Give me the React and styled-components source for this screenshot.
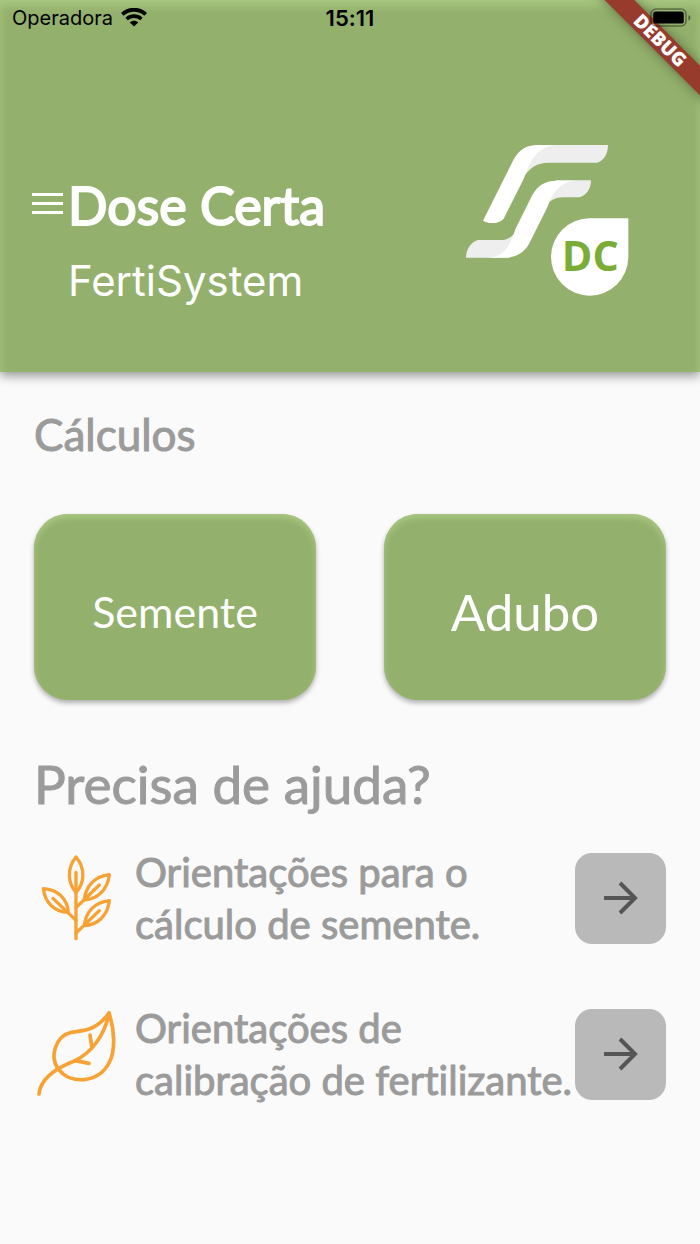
import styled, { createGlobalStyle } from "styled-components";

const GlobalStyle = createGlobalStyle`
  * {
    box-sizing: border-box;
  }
  body {
    margin: 0;
    background-color: #fafafa;
    font-family: Lato, "Open Sans", sans-serif;
    font-variant-ligatures: none;
  }
  h1, h2, p {
    margin: 0;
  }
  button {
    padding: 0;
    border: none;
    font-family: inherit;
    cursor: pointer;
  }
`;

const HeaderStyle = styled.header`
  position: relative;
  padding-bottom: 63px;
  background-color: #93b06c;
  color: white;
  box-shadow: inset 0 6px 10px #a8c880, 0 4px 10px rgba(0, 0, 0, 0.4);
`;

const StatusBar = styled.div`
  display: grid;
  grid-template-columns: 1fr auto 1fr;
  align-items: center;
  height: 36px;
  padding: 0 12px;
  color: black;
  font-family: Inter, sans-serif;
  font-size: 20px;
  line-height: 24px;

  .carrier {
    display: flex;
    align-items: center;
    gap: 8px;
  }
  .time {
    font-size: 22px;
    font-weight: 600;
  }
  .battery {
    position: relative;
    z-index: 2;
    justify-self: end;
    display: block;
    margin-right: -4px;
  }
`;

const DebugBanner = styled.div`
  position: absolute;
  top: 0;
  right: 0;
  width: 130px;
  height: 130px;
  overflow: hidden;
  pointer-events: none;

  span {
    position: absolute;
    top: 30px;
    left: 10px;
    width: 160px;
    height: 21px;
    background-color: #973b2c;
    box-shadow: 0 0 12px rgba(0, 0, 0, 0.4);
    font-family: "Open Sans", sans-serif;
    font-size: 19px;
    font-weight: 800;
    line-height: 21px;
    text-align: center;
    transform: rotate(45deg);
  }
`;

const HeaderContent = styled.div`
  display: flex;
  justify-content: space-between;
  align-items: flex-start;
  padding: 109px 71px 0 32px;
`;

const Brand = styled.div`
  display: grid;
  grid-template-columns: 31px auto;
  column-gap: 5px;
  row-gap: 12px;
  align-items: center;
  padding-top: 24px;

  h1 {
    font-size: 52px;
    font-weight: 400;
    line-height: 72px;
    -webkit-text-stroke: 2px white;
  }
  p {
    grid-column: 2;
    font-family: Inter, sans-serif;
    font-size: 42px;
    line-height: 56px;
  }
`;

const MenuButton = styled.button`
  height: 40px;
  background: none;

  svg {
    display: block;
  }
`;

const Content = styled.main`
  padding: 32px 34px;
`;

const SectionTitle = styled.h2`
  color: #9b9b9b;
  font-size: ${({ $large }) => ($large ? "53px" : "44px")};
  font-weight: 400;
  line-height: ${({ $large }) => ($large ? "68px" : "60px")};
  -webkit-text-stroke: 1px #9b9b9b;
`;

const Cards = styled.div`
  display: flex;
  gap: 68px;
  margin: 50px 0;
`;

const Card = styled.button`
  flex: 1;
  height: 186px;
  padding-top: 8px;
  border-radius: 34px;
  background-color: #93b06c;
  box-shadow: inset 0 4px 6px #a8c880, 0 3px 5px rgba(0, 0, 0, 0.3);
  color: white;
  font-size: ${({ $large }) => ($large ? "51px" : "43px")};
`;

const HelpList = styled.div`
  display: flex;
  flex-direction: column;
  gap: 52px;
  margin-top: 28px;
`;

const HelpRow = styled.div`
  display: flex;
  align-items: center;

  svg {
    flex: none;
  }
  p {
    flex: 1;
    padding-left: 17px;
    color: #9b9b9b;
    font-size: 40px;
    font-weight: 400;
    line-height: 52px;
    -webkit-text-stroke: 1px #9b9b9b;
  }
`;

const ArrowButton = styled.button`
  display: flex;
  flex: none;
  align-items: center;
  justify-content: center;
  width: 91px;
  height: 91px;
  border-radius: 17px;
  background-color: #b9b9b9;
`;

function WifiIcon() {
  return (
    <svg width="26" height="20" viewBox="0 0 26 20" fill="none" stroke="black">
      <path d="M1.3 6.4C8 .2 18 .2 24.7 6.4" strokeWidth="3.8" />
      <path d="M5.6 11C10 7.2 16 7.2 20.4 11" strokeWidth="3.6" />
      <path d="M8.8 14.4C11.3 12.2 14.7 12.2 17.2 14.4L13 18.6Z" fill="black" stroke="none" />
    </svg>
  );
}

function BatteryIcon() {
  return (
    <svg className="battery" width="42" height="20" viewBox="0 0 42 20">
      <rect x="1" y="1" width="35" height="17" rx="5" fill="none" stroke="#000" strokeOpacity="0.4" strokeWidth="1.6" />
      <rect x="3.2" y="3.5" width="30.6" height="12" rx="2.6" />
      <path d="M38.5 7c2.4.7 2.4 4.8 0 5.6Z" fillOpacity="0.5" />
    </svg>
  );
}

function Logo() {
  return (
    <svg width="163" height="152" viewBox="48 45 489 456" role="img" aria-label="FertiSystem DC">
      <path d="M255 45H474C474 72 462 92 441 98H295C262 98 240 112 222 140Z" fill="#eee" />
      <path d="M320 45H258C226 46 204 64 190 90L99 272C116 283 148 282 161 266L222 145C245 80 268 49 320 45Z" fill="#fff" />
      <path d="M318 151H423C423 178 408 197 388 202H340C314 202 298 212 285 232Z" fill="#eee" />
      <path d="M48 383C49 356 62 337 84 330H152C174 330 188 320 200 300L180 383Z" fill="#eee" />
      <path d="M380 152H318C284 152 262 168 247 195L196 298C180 352 158 382 112 383H165C200 383 224 366 238 340L292 232C310 184 332 154 380 152Z" fill="#fff" />
      <path d="M419 265H535V383A116 116 0 1 1 419 265Z" fill="#fff" />
      <text x="421" y="422" fill="#7bac36" fontFamily="Open Sans, sans-serif" fontSize="124" fontWeight="700" textAnchor="middle">
        DC
      </text>
    </svg>
  );
}

function PlantIcon() {
  return (
    <svg width="84" height="88" viewBox="42 45 252 264" fill="none" stroke="#f7a233" strokeWidth="10" strokeLinecap="round" strokeLinejoin="round">
      <path d="M168 299V100" />
      <path d="M168 54C140 88 143 132 168 160C194 132 197 88 168 54Z" />
      <path d="M268 107C223 112 197 142 193 183C234 180 264 150 268 107ZM238 138L168 206" />
      <path d="M268 185C223 190 197 219 193 260C234 258 264 228 268 185ZM238 215L168 282" />
      <path d="M70 149C115 152 142 180 145 220C104 219 75 192 70 149ZM99 178L168 244" />
    </svg>
  );
}

function LeafIcon() {
  return (
    <svg width="84" height="88" viewBox="42 33 252 264" fill="none" stroke="#f7a233" strokeWidth="11" strokeLinecap="round" strokeLinejoin="round">
      <path d="M267 42C283 90 288 155 267 192C235 252 152 258 117 212C87 176 105 112 154 100C190 94 227 97 267 42Z" />
      <path d="M267 42C255 108 215 160 165 185C118 203 62 232 57 285" />
      <path d="M215 142L210 108M165 185L207 193" />
    </svg>
  );
}

function ArrowIcon() {
  return (
    <svg width="34" height="34" viewBox="0 0 34 34" fill="none" stroke="#555" strokeWidth="4">
      <path d="M0 17H31M16 2L31 17L16 32" />
    </svg>
  );
}

const helpItems = [
  { text: "Orientações para o cálculo de semente.", Icon: PlantIcon },
  { text: "Orientações de calibração de fertilizante.", Icon: LeafIcon },
];

function Header() {
  return (
    <HeaderStyle>
      <StatusBar>
        <div className="carrier">
          Operadora
          <WifiIcon />
        </div>
        <div className="time">15:11</div>
        <BatteryIcon />
      </StatusBar>
      <HeaderContent>
        <Brand>
          <MenuButton aria-label="Menu">
            <svg width="31" height="40" viewBox="0 0 31 40" stroke="white" strokeWidth="3">
              <path d="M0 9.5H31M0 18.5H31M0 27.5H31" />
            </svg>
          </MenuButton>
          <h1>Dose Certa</h1>
          <p>FertiSystem</p>
        </Brand>
        <Logo />
      </HeaderContent>
      <DebugBanner>
        <span>DEBUG</span>
      </DebugBanner>
    </HeaderStyle>
  );
}

function App() {
  return (
    <>
      <GlobalStyle />
      <Header />
      <Content>
        <SectionTitle>Cálculos</SectionTitle>
        <Cards>
          <Card>Semente</Card>
          <Card $large>Adubo</Card>
        </Cards>
        <SectionTitle $large>Precisa de ajuda?</SectionTitle>
        <HelpList>
          {helpItems.map(({ text, Icon }) => (
            <HelpRow key={text}>
              <Icon />
              <p>{text}</p>
              <ArrowButton aria-label={text}>
                <ArrowIcon />
              </ArrowButton>
            </HelpRow>
          ))}
        </HelpList>
      </Content>
    </>
  );
}

export default App;
